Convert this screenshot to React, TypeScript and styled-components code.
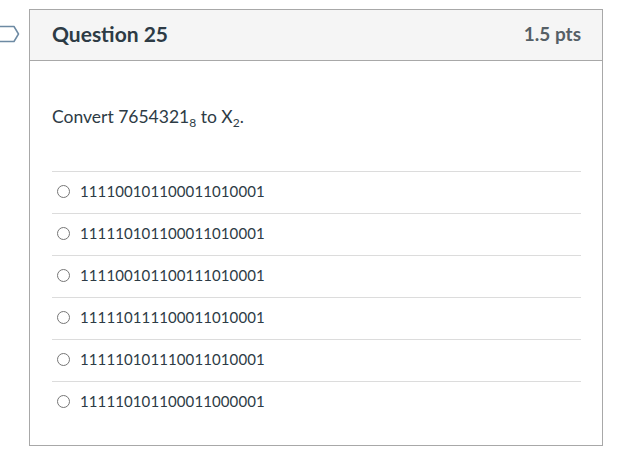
import React from 'react';
import styled, { createGlobalStyle } from 'styled-components';

const GlobalStyle = createGlobalStyle`
  body {
    margin: 0;
    background: #ffffff;
    font-family: Lato, "Liberation Sans", sans-serif;
    color: #2d3b45;
  }
`;

const Page = styled.div`
  display: flex;
  align-items: flex-start;
  padding-top: 9px;
`;

const Flag = styled.svg`
  flex: none;
  width: 20px;
  height: 18px;
  margin: 16px 9px 0 0;
`;

const Card = styled.div`
  box-sizing: border-box;
  width: 574px;
  height: 437px;
  border: 1px solid #a8a8a8;
  background: #ffffff;
`;

const Header = styled.div`
  box-sizing: border-box;
  display: flex;
  align-items: center;
  justify-content: space-between;
  height: 51px;
  padding: 0 21px 2px 22px;
  background: #f5f5f5;
  border-bottom: 1px solid #a8a8a8;
`;

const Title = styled.h2`
  margin: 0;
  font-size: 21px;
  line-height: 24px;
  font-weight: 700;
  color: #2d3b45;
`;

const Points = styled.span`
  font-size: 19px;
  line-height: 24px;
  font-weight: 700;
  color: #555f66;
`;

const Body = styled.div`
  padding: 44px 21px 20px 22px;
`;

const Prompt = styled.p`
  margin: 0 0 42px;
  font-size: 17.5px;
  line-height: 24px;

  sub {
    font-size: 12px;
    line-height: 0;
    vertical-align: -4px;
  }
`;

const Answers = styled.ul`
  margin: 0;
  padding: 0;
  list-style: none;
`;

const Answer = styled.li`
  box-sizing: border-box;
  display: flex;
  align-items: center;
  height: 42px;
  padding: 0 0 3px 5px;
  border-top: 1px solid #dcdcdc;
`;

const Radio = styled.span`
  box-sizing: border-box;
  width: 13px;
  height: 13px;
  margin-right: 10px;
  border: 1px solid #767676;
  border-radius: 50%;
  background: #ffffff;
`;

const AnswerText = styled.span`
  font-size: 15px;
  color: #2d3b45;
  letter-spacing: 0.1px;
`;

const answers = [
  '111100101100011010001',
  '111110101100011010001',
  '111100101100111010001',
  '111110111100011010001',
  '111110101110011010001',
  '111110101100011000001',
];

export default function App() {
  return (
    <>
      <GlobalStyle />
      <Page>
        <Flag viewBox="0 0 20 18">
          <path
            d="M-2 1.5 H14 L18.5 9 L14 16.5 H-2"
            fill="none"
            stroke="#6d8aa3"
            strokeWidth="1.5"
            strokeLinejoin="round"
          />
        </Flag>
        <Card>
          <Header>
            <Title>Question 25</Title>
            <Points>1.5 pts</Points>
          </Header>
          <Body>
            <Prompt>
              Convert 7654321<sub>8</sub> to X<sub>2</sub>.
            </Prompt>
            <Answers>
              {answers.map((a) => (
                <Answer key={a}>
                  <Radio />
                  <AnswerText>{a}</AnswerText>
                </Answer>
              ))}
            </Answers>
          </Body>
        </Card>
      </Page>
    </>
  );
}
